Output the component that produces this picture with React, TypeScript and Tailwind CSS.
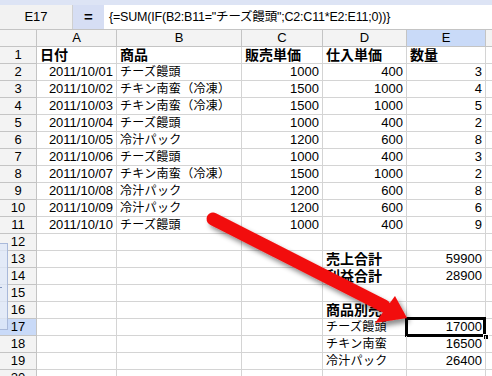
import React from "react";

type Cell = { t?: string; bold?: boolean; right?: boolean; jp?: boolean };

const FONT = "font-['Liberation_Sans','Noto_Sans_CJK_JP',sans-serif]";

const dataRows: string[][] = [
  ["2011/10/01", "チーズ饅頭", "1000", "400", "3"],
  ["2011/10/02", "チキン南蛮（冷凍）", "1500", "1000", "4"],
  ["2011/10/03", "チキン南蛮（冷凍）", "1500", "1000", "5"],
  ["2011/10/04", "チーズ饅頭", "1000", "400", "2"],
  ["2011/10/05", "冷汁パック", "1200", "600", "8"],
  ["2011/10/06", "チーズ饅頭", "1000", "400", "3"],
  ["2011/10/07", "チキン南蛮（冷凍）", "1500", "1000", "2"],
  ["2011/10/08", "冷汁パック", "1200", "600", "8"],
  ["2011/10/09", "冷汁パック", "1200", "600", "6"],
  ["2011/10/10", "チーズ饅頭", "1000", "400", "9"],
];

function buildRows(): Cell[][] {
  const rows: Cell[][] = [];
  rows.push([
    { t: "日付", bold: true },
    { t: "商品", bold: true },
    { t: "販売単価", bold: true },
    { t: "仕入単価", bold: true },
    { t: "数量", bold: true },
  ]);
  for (const r of dataRows) {
    rows.push([
      { t: r[0], right: true },
      { t: r[1], jp: true },
      { t: r[2], right: true },
      { t: r[3], right: true },
      { t: r[4], right: true },
    ]);
  }
  const empty: Cell[] = [{}, {}, {}, {}, {}];
  rows.push(empty);
  rows.push([{}, {}, {}, { t: "売上合計", bold: true }, { t: "59900", right: true }]);
  rows.push([{}, {}, {}, { t: "利益合計", bold: true }, { t: "28900", right: true }]);
  rows.push(empty);
  rows.push([{}, {}, {}, { t: "商品別売上", bold: true }, {}]);
  rows.push([{}, {}, {}, { t: "チーズ饅頭", jp: true }, { t: "17000", right: true }]);
  rows.push([{}, {}, {}, { t: "チキン南蛮", jp: true }, { t: "16500", right: true }]);
  rows.push([{}, {}, {}, { t: "冷汁パック", jp: true }, { t: "26400", right: true }]);
  rows.push(empty);
  return rows;
}

function DataCell({ c, selected }: { c: Cell; selected?: boolean }) {
  let cls =
    "relative h-[17px] border-r border-b border-[#d4d4d4] overflow-visible whitespace-nowrap leading-[16px] text-black ";
  if (c.right) cls += "text-right pr-[3px] text-[13px] ";
  else cls += "text-left pl-[3px] ";
  if (c.bold) cls += "font-bold text-[14px] ";
  else if (c.jp) cls += "text-[12px] tracking-[0.3px] ";
  return (
    <div className={cls}>
      {c.t}
      {selected && (
        <>
          <div className="absolute left-[-2px] top-[-2px] right-[-1px] bottom-[-2px] border-[3px] border-black pointer-events-none" />
          <div className="absolute right-[-4px] bottom-[-5px] w-[6px] h-[6px] bg-black border border-white" />
        </>
      )}
    </div>
  );
}

export default function App() {
  const rows = buildRows();
  const cols = ["A", "B", "C", "D", "E"];
  return (
    <div className={`relative w-[492px] h-[376px] overflow-hidden bg-white ${FONT}`}>
      {/* top strip */}
      <div className="h-[5px] bg-[#dde4f5]" />
      {/* formula bar */}
      <div className="flex h-[25px] border-b border-[#c4c4c4]">
        <div className="w-[73px] bg-[#f2f2f2] border-r border-[#d0d0d0] flex items-center justify-center text-[13px] text-black">
          E17
        </div>
        <div className="w-[31px] bg-[#d6def4] flex items-center justify-center text-[15px] font-bold text-black">
          =
        </div>
        <div className="flex-1 bg-white flex items-center pl-[5px] text-[12.5px] tracking-[-0.2px] text-black whitespace-nowrap overflow-hidden">
          {'{=SUM(IF(B2:B11="チーズ饅頭";C2:C11*E2:E11;0))}'}
        </div>
      </div>

      {/* grid */}
      <div className="grid grid-cols-[37px_80px_125px_81px_84px_79px_1fr]">
        {/* header row */}
        <div className="h-[17px] bg-[#f3f3f3] border-r border-b border-[#c4c4c4]" />
        {cols.map((c) => (
          <div
            key={c}
            className={`h-[17px] border-r border-b border-[#c4c4c4] text-center leading-[16px] text-[13px] text-black ${
              c === "E" ? "bg-[#c9daf8]" : "bg-[#f3f3f3]"
            }`}
          >
            {c}
          </div>
        ))}
        <div className="h-[17px] bg-[#f3f3f3] border-b border-[#c4c4c4]" />

        {rows.map((r, i) => {
          const n = i + 1;
          return (
            <React.Fragment key={n}>
              <div
                className={`h-[17px] border-r border-b border-[#c4c4c4] text-center leading-[16px] text-[13px] text-black ${
                  n === 17 ? "bg-[#c9daf8]" : "bg-[#f3f3f3]"
                }`}
              >
                {n}
              </div>
              {r.map((c, j) => (
                <DataCell key={j} c={c} selected={n === 17 && j === 4} />
              ))}
              <div className="h-[17px] border-b border-[#d4d4d4]" />
            </React.Fragment>
          );
        })}
      </div>

      {/* left overlay widget */}
      <div className="absolute left-0 top-[243px] w-[8px] h-[87px] bg-[#dfe7f8]/80 border border-l-0 border-[#a9b9da]" />
      <div className="absolute left-0 top-[287px] w-[2px] h-[1px] bg-[#7f93bd]" />

      {/* red arrow */}
      <svg
        className="absolute left-0 top-0 pointer-events-none"
        width="492"
        height="376"
        viewBox="0 0 492 376"
      >
        <defs>
          <filter id="sh" x="-20%" y="-20%" width="140%" height="140%">
            <feDropShadow dx="3" dy="4" stdDeviation="2.5" floodColor="#000" floodOpacity="0.45" />
          </filter>
        </defs>
        <g filter="url(#sh)">
          <line x1="213" y1="219" x2="384" y2="306" stroke="#f20d0d" strokeWidth="13" strokeLinecap="round" />
          <polygon points="407,318 395,296 375,323" fill="#f20d0d" />
        </g>
      </svg>
    </div>
  );
}
